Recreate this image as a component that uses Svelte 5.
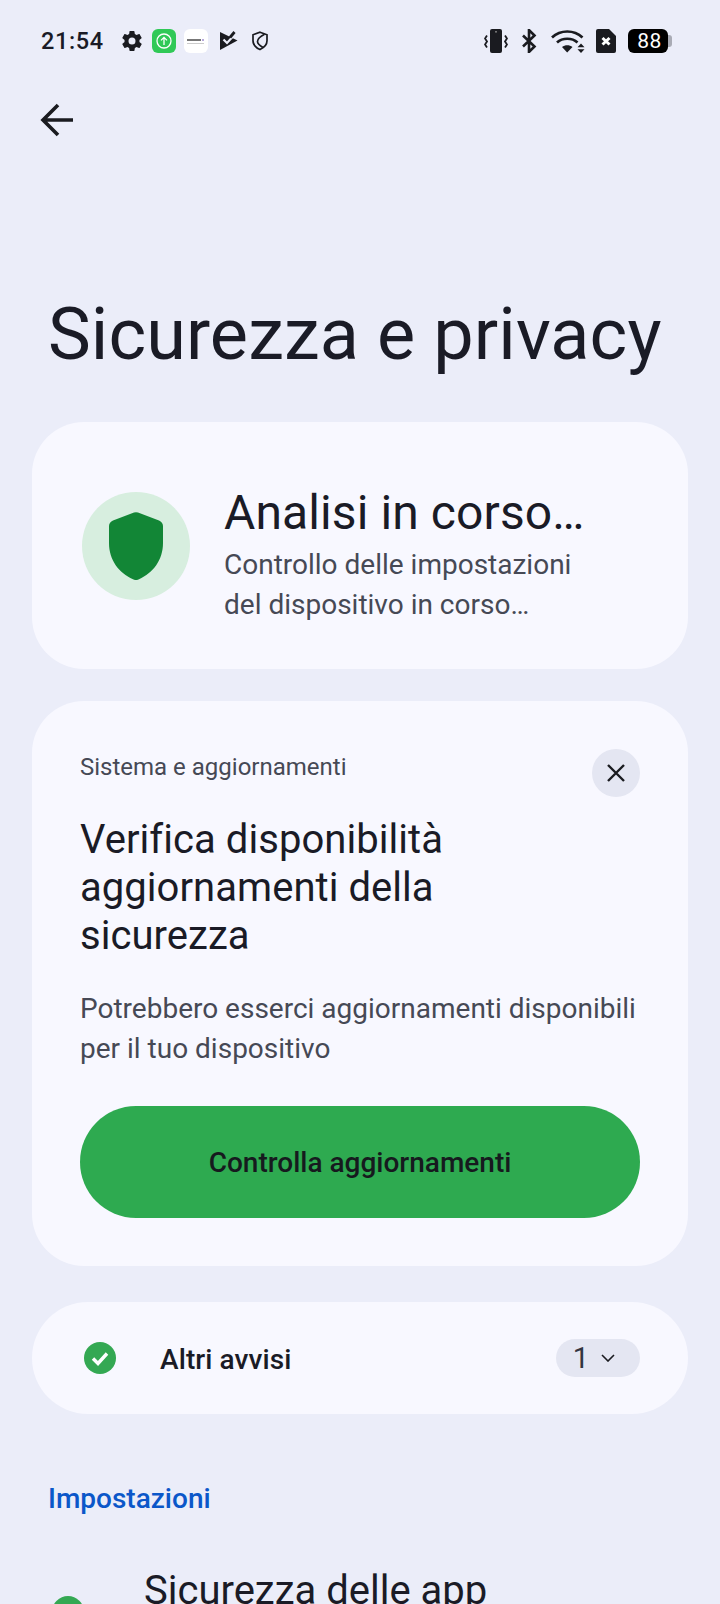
<script>
  const description = "Potrebbero esserci aggiornamenti disponibili per il tuo dispositivo";
</script>

<div class="page">
  <!-- status bar -->
  <div class="status">
    <span class="time">21:54</span>
    <div class="notifs">
      <svg viewBox="0 0 24 24" width="24" height="24"><path fill="#1a1b20" d="M19.4 13c.04-.33.1-.66.1-1s-.06-.67-.1-1l2.1-1.65c.2-.15.25-.42.12-.64l-2-3.46c-.12-.22-.39-.3-.61-.22l-2.49 1c-.52-.4-1.06-.73-1.69-.98l-.37-2.65A.49.49 0 0 0 14 2h-4c-.25 0-.46.18-.5.42l-.37 2.65c-.63.25-1.17.59-1.69.98l-2.49-1c-.22-.09-.49 0-.61.22l-2 3.46c-.13.22-.07.49.12.64L4.57 11c-.04.33-.07.66-.07 1s.03.67.07 1l-2.11 1.65c-.19.15-.25.42-.12.64l2 3.46c.12.22.39.3.61.22l2.49-1c.52.4 1.06.73 1.69.98l.37 2.65c.04.24.25.42.5.42h4c.25 0 .46-.18.5-.42l.37-2.65c.63-.25 1.17-.59 1.69-.98l2.49 1c.22.09.49 0 .61-.22l2-3.46c.12-.22.07-.49-.12-.64L19.4 13zM12 15.500a3.500 3.500 0 1 1 0-7 3.500 3.500 0 0 1 0 7z"/></svg>
      <div class="tile green">
        <svg viewBox="0 0 24 24" width="24" height="24" fill="none" stroke="#fff" stroke-width="1.3"><circle cx="12" cy="12" r="7"/><path d="M12 16V8.600M9 11.400l3-3 3 3"/></svg>
      </div>
      <div class="tile white">
        <svg viewBox="0 0 24 24" width="24" height="24"><rect x="3" y="10" width="14" height="2" fill="#777"/><rect x="18" y="10" width="2" height="2" fill="#b7a9dc"/><rect x="3" y="14" width="17" height="1" fill="#ccc"/></svg>
      </div>
      <svg class="flag" viewBox="0 0 20 20" width="20" height="20"><path fill="#1a1b20" d="M1 1l17.500 8.500L1 19z"/><path d="M4.500 8.500l3.500 3.500 5.500-6" fill="none" stroke="#ebedf9" stroke-width="2.200"/><path d="M11 6.500l4.500-5.500" fill="none" stroke="#1a1b20" stroke-width="2.800"/></svg>
      <svg class="shield" viewBox="0 0 20 20" width="20" height="20" fill="none" stroke="#1a1b20" stroke-width="1.700"><path d="M10 1.200l7 2.600v6c0 4-3 6.900-7 8.800-4-1.900-7-4.800-7-8.800v-6z"/><path d="M14.500 3.200C10 5.500 7.500 8.500 7.500 10.500c0 2 2 4 5.500 6"/></svg>
    </div>
    <div class="sys">
      <svg viewBox="0 0 24 24" width="24" height="24"><rect x="6" y="0" width="12" height="24" rx="2" fill="#1a1b20"/><rect x="11.200" y="2" width="1.600" height="1.600" fill="#888"/><path d="M3 6.500L1 9.500l2 3-2 3 2 3M21 6.500l2 3-2 3 2 3-2 3" fill="none" stroke="#1a1b20" stroke-width="1.800"/></svg>
      <svg viewBox="0 0 15 24" width="15" height="24" fill="none" stroke="#1a1b20" stroke-width="2.600"><path d="M1 6.500l11.500 11L7 23V1l5.500 5.500L1 17.500"/></svg>
      <svg class="wifi" viewBox="0 0 34 24" width="34" height="24"><g fill="none" stroke="#1a1b20" stroke-width="2.700"><path d="M1 8.500C9.500 .5 23 .5 31.500 8.500"/><path d="M6 13.500c5.500-5 15-5 20.500 0"/></g><path fill="#1a1b20" d="M11 18c3-2.500 7.500-2.500 10.500 0L16.200 23.500z"/><path fill="#1a1b20" d="M30 14.500l3.500 3.700h-7zM30 24l-3.500-3.700h7z"/></svg>
      <svg viewBox="0 0 20 24" width="20" height="24"><path fill="#1a1b20" d="M2 0h11l7 7v15a2 2 0 0 1-2 2H2a2 2 0 0 1-2-2V2a2 2 0 0 1 2-2z"/><path d="M6.500 9l7 6.500M13.500 9l-7 6.500" stroke="#fff" stroke-width="3"/></svg>
      <div class="battery"><span class="level">88</span></div>
    </div>
  </div>

  <div class="toolbar">
    <svg viewBox="0 0 36 36" width="36" height="36" fill="none" stroke="#1a1b20" stroke-width="3.600"><path d="M34 18H4M19 3L4 18l15 15"/></svg>
  </div>

  <h1>Sicurezza e privacy</h1>

  <section class="card scan">
    <div class="halo">
      <svg viewBox="0 0 54 68" width="54" height="68"><path fill="#128636" d="M25 .6a6 6 0 0 1 4 0L50 8.500c2.400.9 4 3 4 5.500v17C54 48 44 61 30 67.200a6 6 0 0 1-6 0C10 61 0 48 0 31V14c0-2.500 1.600-4.600 4-5.500z"/></svg>
    </div>
    <div class="scan-text">
      <h2>Analisi in corso…</h2>
      <p>Controllo delle impostazioni<br />del dispositivo in corso…</p>
    </div>
  </section>

  <section class="card issue">
    <div class="issue-head">
      <span class="eyebrow">Sistema e aggiornamenti</span>
      <button class="close" aria-label="Chiudi">
        <svg viewBox="0 0 20 20" width="20" height="20" stroke="#1a1b20" stroke-width="2.400"><path d="M2 2l16 16M18 2L2 18"/></svg>
      </button>
    </div>
    <h3>Verifica disponibilità<br />aggiornamenti della<br />sicurezza</h3>
    <p class="desc">{description}</p>
    <button class="cta">Controlla aggiornamenti</button>
  </section>

  <section class="card alerts">
    <svg viewBox="0 0 32 32" width="32" height="32"><circle cx="16" cy="16" r="16" fill="#34a853"/><path d="M9 16.500l5 5 9-10" fill="none" stroke="#fff" stroke-width="3.400"/></svg>
    <span class="alerts-label">Altri avvisi</span>
    <div class="count"><span>1</span><svg viewBox="0 0 14 8" width="14" height="8" fill="none" stroke="#1a1b20" stroke-width="1.600"><path d="M1 1l6 6 6-6"/></svg></div>
  </section>

  <h4>Impostazioni</h4>

  <div class="row">
    <svg viewBox="0 0 32 32" width="32" height="32"><circle cx="16" cy="16" r="16" fill="#34a853"/></svg>
    <span class="row-title">Sicurezza delle app</span>
  </div>
</div>

<style>
  :global(body) {
    background: #ebedf9;
    overflow: hidden;
  }

  .page {
    height: 1604px;
    overflow: hidden;
    font-family: Roboto, "Noto Sans", sans-serif;
    color: #1a1b26;
    padding: 0 32px;
    box-sizing: border-box;
  }

  .status {
    display: flex;
    align-items: center;
    height: 41px;
    padding: 20px 52px 0 41px;
    margin: 0 -32px;
  }

  .time {
    font-size: 23.500px;
    font-weight: 500;
    letter-spacing: 0.6px;
    width: 79px;
  }

  .notifs {
    display: flex;
    align-items: center;
    gap: 8px;
  }

  .tile {
    width: 24px;
    height: 24px;
    border-radius: 6px;
  }

  .green {
    background: #30c957;
  }

  .white {
    background: #fff;
  }

  .flag {
    margin-left: 3px;
  }

  .shield {
    margin-left: 3px;
  }

  .sys {
    margin-left: auto;
    display: flex;
    align-items: center;
    gap: 14px;
  }

  .wifi {
    margin-right: -3px;
  }

  .battery {
    display: flex;
    align-items: center;
    position: relative;
    width: 40px;
    height: 24px;
    background: #000;
    border-radius: 6px;
    margin-left: -2px;
  }

  .battery::after {
    content: "";
    position: absolute;
    right: -4px;
    width: 4px;
    height: 12px;
    border-radius: 0 3px 3px 0;
    background: #a9abb5;
  }

  .level {
    color: #fff;
    font-size: 21px;
    font-weight: 400;
    width: 100%;
    padding-left: 3px;
    text-align: center;
    letter-spacing: 0.5px;
  }

  .toolbar {
    height: 36px;
    margin-top: 41px;
    margin-left: 7px;
    display: flex;
  }

  h1 {
    margin: 155px 0 0 16px;
    font-size: 72px;
    font-weight: 400;
    line-height: 84px;
    letter-spacing: 0.1px;
    white-space: nowrap;
  }

  .card {
    background: #f8f8ff;
    box-sizing: border-box;
  }

  .scan {
    margin-top: 45px;
    height: 247px;
    border-radius: 52px;
    display: flex;
    align-items: center;
    padding-left: 50px;
    gap: 34px;
  }

  .halo {
    width: 108px;
    height: 108px;
    border-radius: 50%;
    background: #d7eedf;
    display: flex;
    align-items: center;
    justify-content: center;
  }

  .scan-text {
    padding-top: 18px;
  }

  .scan-text h2 {
    margin: 0;
    font-size: 48px;
    font-weight: 400;
    line-height: 56px;
    letter-spacing: 0.1px;
  }

  .scan-text p {
    margin: 4px 0 0;
    font-size: 28px;
    line-height: 40px;
    color: #464955;
  }

  .issue {
    margin-top: 32px;
    height: 565px;
    border-radius: 52px;
    padding: 50px 48px 0;
  }

  .issue-head {
    display: flex;
    justify-content: space-between;
    align-items: flex-start;
    height: 48px;
  }

  .eyebrow {
    font-size: 24px;
    line-height: 32px;
    color: #464955;
  }

  .close {
    width: 48px;
    height: 48px;
    border: none;
    border-radius: 50%;
    background: #e4e6f2;
    padding: 0;
    margin-top: -2px;
    display: flex;
    align-items: center;
    justify-content: center;
  }

  h3 {
    margin: 17px 0 0;
    font-size: 40px;
    font-weight: 400;
    line-height: 48px;
    letter-spacing: 0.05px;
  }

  .desc {
    margin: 29px 0 0;
    font-size: 28px;
    line-height: 40px;
    color: #464955;
  }

  .cta {
    display: block;
    width: 100%;
    height: 112px;
    margin-top: 37px;
    border: none;
    border-radius: 56px;
    background: #2eaa50;
    color: #161a1e;
    font-family: inherit;
    font-size: 28px;
    font-weight: 500;
  }

  .alerts {
    margin-top: 36px;
    height: 112px;
    border-radius: 56px;
    display: flex;
    align-items: center;
    padding: 0 48px 0 52px;
  }

  .alerts-label {
    margin-left: 44px;
    font-size: 28px;
    font-weight: 500;
    letter-spacing: 0.1px;
    padding-top: 2px;
  }

  .count {
    margin-left: auto;
    width: 84px;
    height: 38px;
    padding-right: 8px;
    box-sizing: border-box;
    border-radius: 19px;
    background: #e4e6f2;
    display: flex;
    align-items: center;
    justify-content: center;
    gap: 12px;
    font-size: 29px;
    color: #33353f;
  }

  h4 {
    margin: 67px 0 0 16px;
    font-size: 28px;
    font-weight: 500;
    line-height: 36px;
    color: #0b57c9;
  }

  .row {
    margin-top: 50px;
    margin-left: 20px;
    display: flex;
    align-items: flex-start;
    gap: 60px;
  }

  .row svg {
    margin-top: 29px;
    flex: none;
  }

  .row-title {
    font-size: 40px;
    line-height: 48px;
  }
</style>
